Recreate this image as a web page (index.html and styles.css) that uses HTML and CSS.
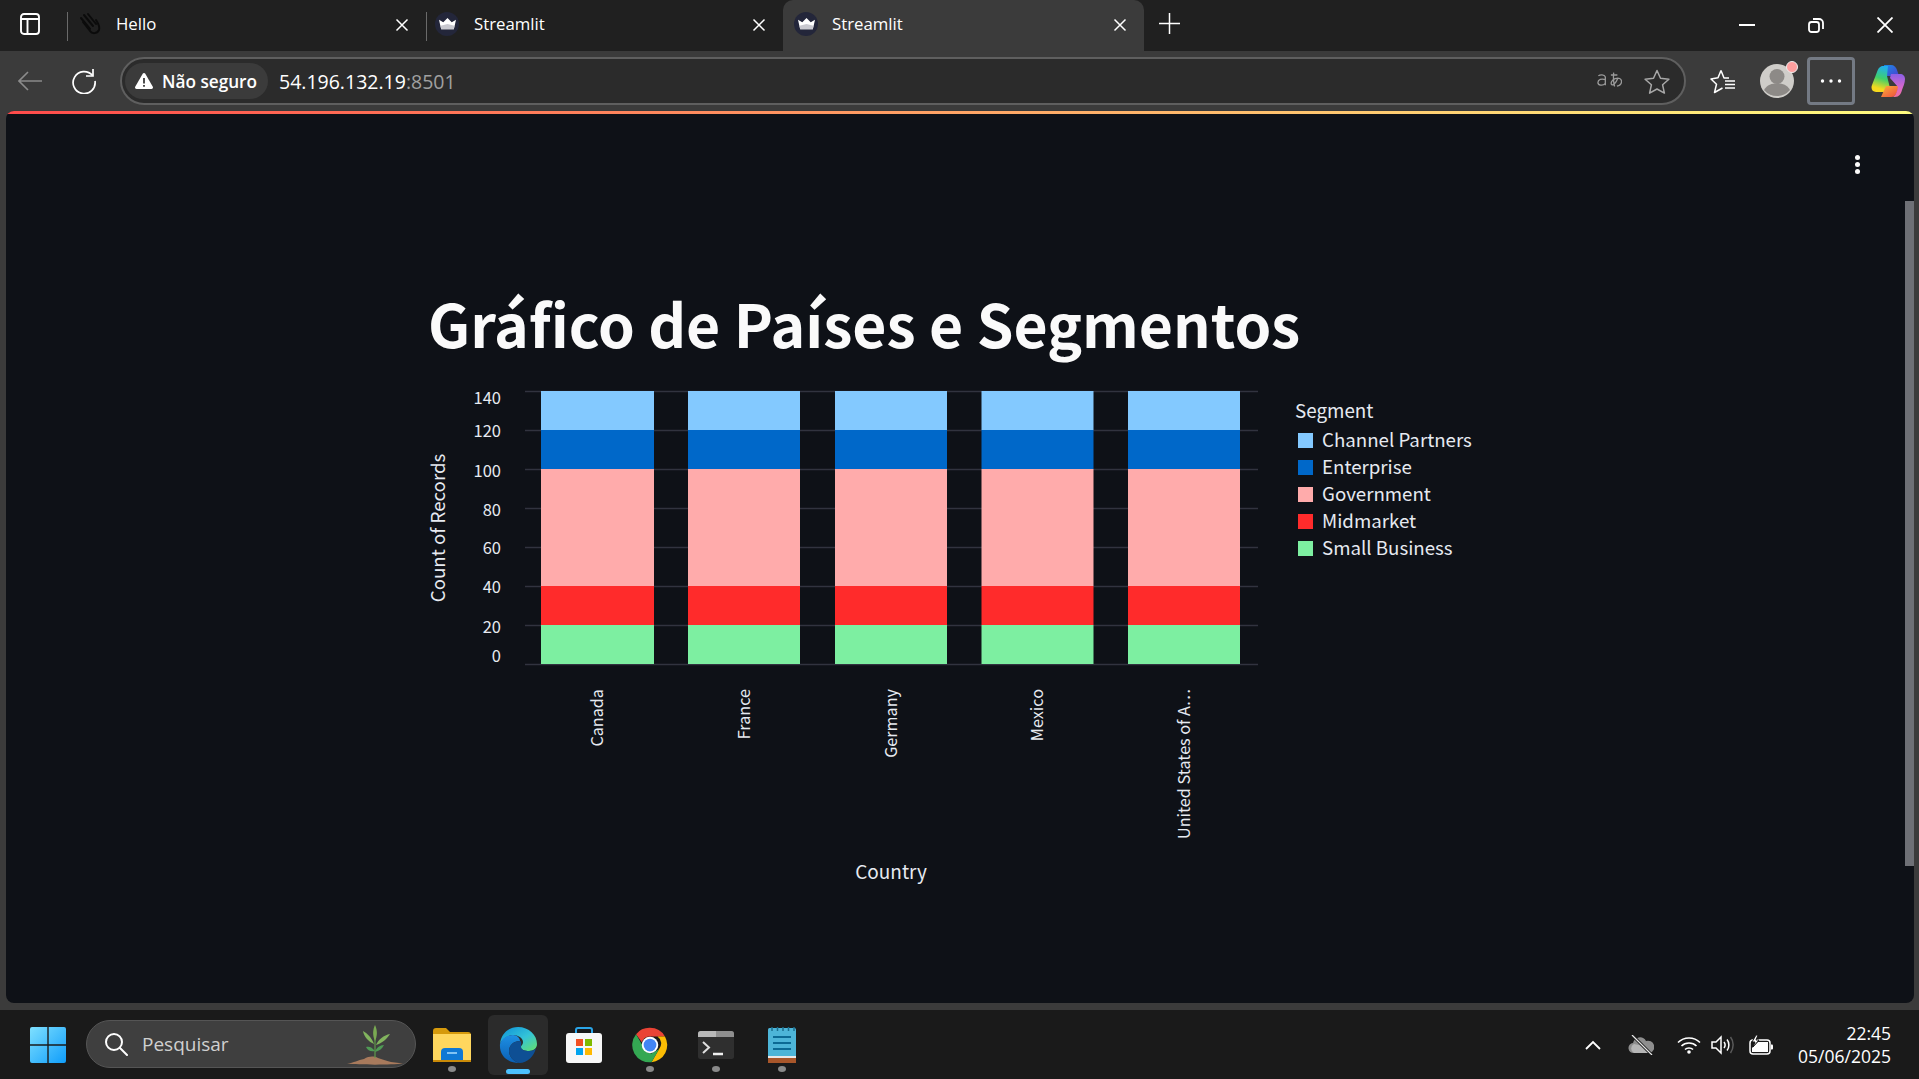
FILE: index.html
```html
<!DOCTYPE html>
<html lang="pt-BR">
<head>
<meta charset="utf-8">
<title>Streamlit</title>
<link rel="stylesheet" href="styles.css">
</head>
<body>
<div class="window">
  <header class="tabstrip">
    <button class="side-btn">
      <svg width="20" height="22" viewBox="0 0 20 22" fill="none" stroke="#fff" stroke-width="1.900"><rect x="1" y="1" width="18" height="20" rx="3"/><path d="M1 6h18M7.500 6v15"/></svg>
    </button>
    <div class="tab">
      <span class="favicon hand">
        <svg width="24" height="24" viewBox="0 0 24 24" fill="none" stroke="#0b0b0b" stroke-width="2" stroke-linecap="round"><path d="M5 10l7 9c2 3 7 3 9-1 1-3-1-7-3-10M3 6l9 11M6 3l9 11M10 2l8 10"/></svg>
      </span>
      <span class="tab-title">Hello</span>
      <svg class="tab-close" width="14" height="14" viewBox="0 0 14 14" stroke="#fff" stroke-width="1.5"><path d="M1.500 1.500l11 11M12.500 1.500l-11 11"/></svg>
    </div>
    <div class="tab tab-second">
      <span class="favicon oval">
        <svg width="17" height="12" viewBox="0 0 16 14" preserveAspectRatio="none"><path d="M0 2l4 3 4-5 4 5 4-3-2 11H2z" fill="#fff"/><path d="M1.500 9L8 7l6.500 2-.6 4H2.100z" fill="#c9c9d0"/></svg>
      </span>
      <span class="tab-title">Streamlit</span>
      <svg class="tab-close" width="14" height="14" viewBox="0 0 14 14" stroke="#fff" stroke-width="1.5"><path d="M1.500 1.500l11 11M12.500 1.500l-11 11"/></svg>
    </div>
    <div class="tab tab-active">
      <span class="favicon oval">
        <svg width="17" height="12" viewBox="0 0 16 14" preserveAspectRatio="none"><path d="M0 2l4 3 4-5 4 5 4-3-2 11H2z" fill="#fff"/><path d="M1.500 9L8 7l6.500 2-.6 4H2.100z" fill="#c9c9d0"/></svg>
      </span>
      <span class="tab-title">Streamlit</span>
      <svg class="tab-close" width="14" height="14" viewBox="0 0 14 14" stroke="#fff" stroke-width="1.5"><path d="M1.500 1.500l11 11M12.500 1.500l-11 11"/></svg>
    </div>
    <button class="new-tab">
      <svg width="21" height="21" viewBox="0 0 21 21" stroke="#fff" stroke-width="1.5"><path d="M10.500 0v21M0 10.500h21"/></svg>
    </button>
    <div class="win-controls">
      <svg width="16" height="16" viewBox="0 0 16 16" stroke="#fff" stroke-width="2"><path d="M0 8h16"/></svg>
      <svg width="16" height="16" viewBox="0 0 16 16" fill="none" stroke="#fff" stroke-width="1.8"><rect x="1" y="5" width="10" height="10" rx="2.500"/><path d="M5 2h6a4 4 0 0 1 4 4v6"/></svg>
      <svg width="16" height="16" viewBox="0 0 16 16" stroke="#fff" stroke-width="1.800"><path d="M.5.5l15 15M15.500.5l-15 15"/></svg>
    </div>
  </header>

  <nav class="toolbar">
    <button class="tool">
      <svg width="24" height="20" viewBox="0 0 24 20" fill="none" stroke="#8b8b8b" stroke-width="1.600"><path d="M24 10H1M10 1l-9 9 9 9"/></svg>
    </button>
    <button class="tool">
      <svg width="26" height="26" viewBox="0 0 26 26" fill="none" stroke="#fff" stroke-width="1.700"><path d="M21.500 7.500A11 11 0 1 0 24 13"/><path d="M22 1v7h-7"/></svg>
    </button>
    <div class="address">
      <div class="security">
        <svg width="18" height="16" viewBox="0 0 18 16"><path d="M9 0c.6 0 1 .3 1.300.8l7.500 13c.5 1-.1 2.200-1.300 2.200h-15C.3 16-.3 14.800.2 13.800L7.700.8C8 .3 8.400 0 9 0z" fill="#fff"/><path d="M8.100 5h1.800v5.500H8.100zM8.100 12h1.800v1.800H8.100z" fill="#3b3b3b"/></svg>
        <span>Não seguro</span>
      </div>
      <span class="url">54.196.132.19<span class="port">:8501</span></span>
      <span class="translate">
        <svg width="25" height="20" viewBox="0 0 27 20" fill="none" stroke="#9a9a9a" stroke-width="1.400"><path d="M1.500 4.500C3 3 8 2.500 9 5.500v9M9 8.500C5 7 1 8.500 1 11.500s5 4.500 8 1"/><path d="M15 3.500h7M18 1c-.5 6-.5 10 1 15M22.500 7c-2 5-5 8-6.500 7s-.5-5 3.500-6.500 7 0 7 3-2.500 4.500-5 5"/></svg>
      </span>
      <svg class="addr-star" width="26" height="25" viewBox="0 0 26 25" fill="none" stroke="#a8a8a8" stroke-width="1.500" stroke-linejoin="round"><path d="M13 1.500l3.500 7.800 8.400.9-6.300 5.600 1.800 8.300L13 20l-7.400 4.100 1.800-8.300-6.300-5.600 8.400-.9z"/></svg>
    </div>
    <button class="tool fav-list">
      <svg width="26" height="25" viewBox="0 0 26 25" fill="none" stroke="#fff" stroke-width="1.500" stroke-linejoin="round"><path d="M11 1.500L8 8.800 1 10l5.500 5.300L4.500 23.500l8-4.500"/><path d="M11 1.500l3 7.500h5M15 12h10M15 15.500h10M15 19h10"/></svg>
    </button>
    <div class="avatar">
      <svg width="36" height="36" viewBox="0 0 36 36"><circle cx="18" cy="18" r="17" fill="#cfcdc9"/><circle cx="18" cy="13.500" r="7.500" fill="#8d8a87"/><path d="M5 27c3-5.500 8-6.500 13-6.500S28 21.500 31 27a17 17 0 0 1-26 0z" fill="#8d8a87"/></svg>
      <span class="avatar-badge"></span>
    </div>
    <button class="more">
      <svg width="22" height="6" viewBox="0 0 22 6" fill="#fff"><circle cx="2.500" cy="3" r="1.700"/><circle cx="11" cy="3" r="1.700"/><circle cx="19.500" cy="3" r="1.700"/></svg>
    </button>
    <div class="copilot">
      <svg width="34" height="32" viewBox="0 0 34 32">
        <defs>
          <linearGradient id="cpA" x1=".5" y1="0" x2=".3" y2="1"><stop offset="0" stop-color="#22b0ec"/><stop offset=".45" stop-color="#3fd06a"/><stop offset=".85" stop-color="#f6d91e"/></linearGradient>
          <linearGradient id="cpB" x1=".5" y1="0" x2=".5" y2="1"><stop offset="0" stop-color="#8b5fe6"/><stop offset=".6" stop-color="#d868cc"/><stop offset="1" stop-color="#f2709a"/></linearGradient>
          <linearGradient id="cpC" x1="0" y1="0" x2="1" y2="1"><stop offset="0" stop-color="#1a8ce8"/><stop offset="1" stop-color="#4a3fd0"/></linearGradient>
          <linearGradient id="cpD" x1="0" y1="0" x2="1" y2="1"><stop offset="0" stop-color="#fbb03a"/><stop offset="1" stop-color="#ee4a3e"/></linearGradient>
        </defs>
        <path d="M13 0h7c3 0 5 2 6 5l2 6H16z" fill="url(#cpC)"/>
        <path d="M11 1c-3 1-4 3-5 6L1 20c-1.500 4 .5 7 4 7h9c2 0 4-1 5-4l-3-12 1-10c-2 0-4 0-6 0z" fill="url(#cpA)"/>
        <path d="M10 32h10c3 0 5-2 6-5l2-6H15z" fill="url(#cpD)"/>
        <path d="M20 9h9c3 0 5 2 5 5 0 4-2 8-3 11-1 4-3 7-7 7h-2c2-1 3-3 4-6l1-4-8-9z" fill="url(#cpB)"/>
      </svg>
    </div>
  </nav>

  <main class="page">
    <div class="decoration"></div>
    <div class="menu-dots"><i></i><i></i><i></i></div>
    <div class="scroll-thumb"></div>
    <section class="block">
      <h1 class="title">Gráfico de Países e Segmentos</h1>
      <svg class="chart" width="1100" height="520" viewBox="416 380 1100 520">
        <g class="grid">
          <path d="M525 391.500H1258M525 430.500H1258M525 469.500H1258M525 508.500H1258M525 547.500H1258M525 586.500H1258M525 625.500H1258M525 664.500H1258"/>
        </g>
        <g>
          <rect class="s1" x="541" y="391" width="113" height="39"/><rect class="s2" x="541" y="430" width="113" height="39"/><rect class="s3" x="541" y="469" width="113" height="117"/><rect class="s4" x="541" y="586" width="113" height="39"/><rect class="s5" x="541" y="625" width="113" height="39"/>
          <rect class="s1" x="688" y="391" width="112" height="39"/><rect class="s2" x="688" y="430" width="112" height="39"/><rect class="s3" x="688" y="469" width="112" height="117"/><rect class="s4" x="688" y="586" width="112" height="39"/><rect class="s5" x="688" y="625" width="112" height="39"/>
          <rect class="s1" x="835" y="391" width="112" height="39"/><rect class="s2" x="835" y="430" width="112" height="39"/><rect class="s3" x="835" y="469" width="112" height="117"/><rect class="s4" x="835" y="586" width="112" height="39"/><rect class="s5" x="835" y="625" width="112" height="39"/>
          <rect class="s1" x="981.500" y="391" width="112" height="39"/><rect class="s2" x="981.500" y="430" width="112" height="39"/><rect class="s3" x="981.500" y="469" width="112" height="117"/><rect class="s4" x="981.500" y="586" width="112" height="39"/><rect class="s5" x="981.500" y="625" width="112" height="39"/>
          <rect class="s1" x="1128" y="391" width="112" height="39"/><rect class="s2" x="1128" y="430" width="112" height="39"/><rect class="s3" x="1128" y="469" width="112" height="117"/><rect class="s4" x="1128" y="586" width="112" height="39"/><rect class="s5" x="1128" y="625" width="112" height="39"/>
        </g>
        <g class="ticks-y">
          <text x="501" y="404">140</text><text x="501" y="437">120</text><text x="501" y="477">100</text><text x="501" y="516">80</text><text x="501" y="554">60</text><text x="501" y="593">40</text><text x="501" y="633">20</text><text x="501" y="662">0</text>
        </g>
        <text class="axis-y" transform="translate(445 528) rotate(-90)">Count of Records</text>
        <g class="ticks-x">
          <text transform="translate(603 689) rotate(-90)">Canada</text>
          <text transform="translate(750 689) rotate(-90)">France</text>
          <text transform="translate(897 689) rotate(-90)">Germany</text>
          <text transform="translate(1043 689) rotate(-90)">Mexico</text>
          <text transform="translate(1190 689) rotate(-90)">United States of A…</text>
        </g>
        <text class="axis-x" x="891" y="879">Country</text>
        <text class="legend-title" x="1295" y="418">Segment</text>
        <g class="legend">
          <rect class="s1" x="1298" y="433" width="15" height="15"/><text x="1322" y="447">Channel Partners</text>
          <rect class="s2" x="1298" y="460" width="15" height="15"/><text x="1322" y="474">Enterprise</text>
          <rect class="s3" x="1298" y="487" width="15" height="15"/><text x="1322" y="501">Government</text>
          <rect class="s4" x="1298" y="514" width="15" height="15"/><text x="1322" y="528">Midmarket</text>
          <rect class="s5" x="1298" y="541" width="15" height="15"/><text x="1322" y="555">Small Business</text>
        </g>
      </svg>
    </section>
  </main>

  <footer class="taskbar">
    <button class="start">
      <svg width="36" height="36" viewBox="0 0 36 36">
        <defs><linearGradient id="winG" x1="0" y1="0" x2="1" y2="1"><stop offset="0" stop-color="#7fe0ff"/><stop offset="1" stop-color="#0f9dfa"/></linearGradient></defs>
        <path d="M2 0h15.300v17.300H0V2a2 2 0 0 1 2-2zM18.700 0H34a2 2 0 0 1 2 2v15.300H18.700zM0 18.700h17.300V36H2a2 2 0 0 1-2-2zM18.700 18.700H36V34a2 2 0 0 1-2 2H18.700z" fill="url(#winG)"/>
      </svg>
    </button>
    <div class="search">
      <svg width="24" height="24" viewBox="0 0 24 24" fill="none" stroke="#fff" stroke-width="2"><circle cx="10" cy="10" r="8"/><path d="M16 16l7 7" stroke-linecap="round"/></svg>
      <span class="search-text">Pesquisar</span>
      <svg class="plant" width="56" height="40" viewBox="0 0 56 40">
        <path d="M0 38.500c7-.5 11-3.500 17-4.500 5-3 10-3 14-1 4 1 8 3 13 4 4 .5 8 1 12 1.500-12 1.500-44 1.500-56 0z" fill="#a87a5c"/>
        <path d="M28 33V6" stroke="#5f9a4a" stroke-width="1.200" fill="none"/>
        <path d="M28 0c2.500 5 2.500 11 0 16-2.500-5-2.500-11 0-16z" fill="#7aaa52"/>
        <path d="M16 6c4 2 9 7 11 13-5-2-10-7-11-13zM43 9c-3 5-8 9-14 11 2-5 8-10 14-11z" fill="#82b45e"/>
        <path d="M19 22c3-1 6 0 9 4-4 1-7 0-9-4zM37 20c-2 4-5 6-9 7 1-4 5-7 9-7z" fill="#4f9a55"/>
      </svg>
    </div>
    <div class="apps">
      <div class="app">
        <svg width="38" height="34" viewBox="0 0 38 34">
          <path d="M0 3a3 3 0 0 1 3-3h10l4 4h18a3 3 0 0 1 3 3v4H0z" fill="#d69a0c"/>
          <path d="M0 6h38v26a2 2 0 0 1-2 2H2a2 2 0 0 1-2-2z" fill="#ffd75e"/>
          <path d="M8 34V24a4 4 0 0 1 4-4h14a4 4 0 0 1 4 4v10z" fill="#0f78d4"/>
          <path d="M14 25h10" stroke="#a8dcff" stroke-width="1.500"/>
          <path d="M0 32h38v2H0z" fill="#c98a08"/>
        </svg>
        <i class="dot"></i>
      </div>
      <div class="app app-active">
        <svg width="38" height="36" viewBox="0 0 38 36">
          <defs>
            <linearGradient id="edgeA" x1="0" y1="0" x2="1" y2="1"><stop offset="0" stop-color="#0c8fd8"/><stop offset=".55" stop-color="#34c4d8"/><stop offset="1" stop-color="#66e06a"/></linearGradient>
            <linearGradient id="edgeB" x1="0" y1="0" x2="0" y2="1"><stop offset="0" stop-color="#1e90e4"/><stop offset="1" stop-color="#0a5fb4"/></linearGradient>
          </defs>
          <path d="M19 0c11 0 19 8 19 17 0 4-3 7-8 7-4 0-8-1-8-4 0-1.500 2-2 2-5 0-4-5-7-10-7C9 8 3 12 1 17 2 7 9 0 19 0z" fill="url(#edgeA)"/>
          <path d="M1 17c2-6 8-9 13-9 4 0 7 3 7 6-6 0-11 4-11 10 0 5 4 10 10 12C9 36 0 29 1 17z" fill="url(#edgeB)"/>
          <path d="M10 24c0-6 5-10 11-10 2 0 1 3 1 6 0 3 4 4 8 4 3 0 6-1 7-3-2 8-8 15-17 15-6-2-10-7-10-12z" fill="#0e4f94"/>
        </svg>
        <i class="pill"></i>
      </div>
      <div class="app">
        <svg width="36" height="36" viewBox="0 0 36 36">
          <path d="M10 8V3a2 2 0 0 1 2-2h12a2 2 0 0 1 2 2v5" fill="none" stroke="#2aa5e8" stroke-width="2"/>
          <rect y="6" width="36" height="30" rx="3" fill="#f7f7f7"/>
          <rect x="10" y="12" width="7" height="7" fill="#f25022"/><rect x="19" y="12" width="7" height="7" fill="#7fba00"/><rect x="10" y="21" width="7" height="7" fill="#00a4ef"/><rect x="19" y="21" width="7" height="7" fill="#ffb900"/>
        </svg>
      </div>
      <div class="app">
        <svg width="36" height="36" viewBox="0 0 48 48">
          <path d="M24 1a23 23 0 0 1 19.900 11.500H24a11.500 11.500 0 0 0-10.900 7.900L5.400 9.600A23 23 0 0 1 24 1z" fill="#ea4335"/>
          <path d="M43.900 12.500A23 23 0 0 1 26 46.900l10-17.300a11.500 11.500 0 0 0-2-17.100z" fill="#fbbc04"/>
          <path d="M26 46.900A23 23 0 0 1 5.400 9.600l10 17.400a11.500 11.500 0 0 0 10.600 8.300l10-5.700z" fill="#34a853"/>
          <circle cx="24" cy="24" r="11" fill="#fff"/><circle cx="24" cy="24" r="8.500" fill="#4285f4"/>
        </svg>
        <i class="dot"></i>
      </div>
      <div class="app">
        <svg width="36" height="28" viewBox="0 0 36 28">
          <rect width="36" height="28" rx="2.500" fill="#2f2f2f"/>
          <path d="M2.500 0h16v6H0V2.500A2.500 2.500 0 0 1 2.500 0z" fill="#b8b8b8"/>
          <path d="M18 0h15.500A2.500 2.500 0 0 1 36 2.500V6H18z" fill="#8f8f8f"/>
          <path d="M5 11l6 5.500-6 5.500" fill="none" stroke="#e0e0e0" stroke-width="2"/>
          <path d="M15 23h10" stroke="#f0f0f0" stroke-width="2.500"/>
        </svg>
        <i class="dot"></i>
      </div>
      <div class="app">
        <svg width="28" height="36" viewBox="0 0 28 36">
          <rect y="1" width="28" height="33" rx="1.500" fill="#4db5d8"/>
          <path d="M0 30h28v6H0z" fill="#a8562a"/>
          <path d="M0 29h28v2H0z" fill="#e8e8e8"/>
          <path d="M4 0v4M9.500 0v4M15 0v4M20.500 0v4M26 0v4" stroke="#1b6f8e" stroke-width="1.500"/>
          <path d="M5 10h18M5 16h18M5 22h18" stroke="#0c6a94" stroke-width="2.200"/>
        </svg>
        <i class="dot"></i>
      </div>
    </div>
    <div class="tray">
      <span class="tray-item chevron">
        <svg width="16" height="10" viewBox="0 0 16 10" fill="none" stroke="#fff" stroke-width="1.800"><path d="M1 9l7-7 7 7"/></svg>
      </span>
      <span class="tray-item cloud">
        <svg width="26" height="20" viewBox="0 0 26 20"><path d="M6 18a5 5 0 0 1-1-10 7 7 0 0 1 13-2 6 6 0 0 1 4 12z" fill="#8e8e8e"/><path d="M6 18a5 5 0 0 1 0-9l9 2 7 7z" fill="#b5b5b5"/><path d="M4 0l20 20" stroke="#1a1a1a" stroke-width="3"/><path d="M4 0l20 20" stroke="#e8e8e8" stroke-width="1.200"/></svg>
      </span>
      <span class="tray-item wifi">
        <svg width="24" height="18" viewBox="0 0 24 18" fill="none" stroke="#fff" stroke-width="1.600"><path d="M1 6.500c6-6 16-6 22 0M4.500 10c4-4 11-4 15 0M8 13.500c2-2 6-2 8 0"/><circle cx="12" cy="16" r="1.800" fill="#fff" stroke="none"/></svg>
      </span>
      <span class="tray-item volume">
        <svg width="24" height="20" viewBox="0 0 24 20" fill="none" stroke="#fff" stroke-width="1.500"><path d="M1 7h4l5-5v16l-5-5H1z"/><path d="M13 7c1.500 2 1.500 4 0 6M16 4.500c2.500 3 2.500 8 0 11"/><path d="M19.500 2c3.500 4.500 3.500 11 0 16" stroke="#5a5a5a"/></svg>
      </span>
      <span class="tray-item battery">
        <svg width="24" height="20" viewBox="0 0 24 20"><rect x="1" y="5" width="20" height="14" rx="3" fill="none" stroke="#fff" stroke-width="1.500"/><path d="M22 9.500h1a1 1 0 0 1 1 1v3a1 1 0 0 1-1 1h-1z" fill="#fff"/><path d="M3 17V13L9 7h10v10z" fill="#fff"/><path d="M7 0L3 7h3L4 12l6-7H7l2-5z" fill="#fff" stroke="#1a1a1a"/></svg>
      </span>
      <div class="clock"><span>22:45</span><span>05/06/2025</span></div>
    </div>
  </footer>
</div>
</body>
</html>
```
FILE: styles.css
```css
* { box-sizing: border-box; }
html, body { margin: 0; height: 100%; overflow: hidden; }
body { background: #3b3b3b; font-family: "Open Sans", "Noto Sans", sans-serif; color: #fff; }
button { background: none; border: 0; padding: 0; color: inherit; display: flex; align-items: center; justify-content: center; }
svg { display: block; flex: none; }

.window { display: flex; flex-direction: column; height: 1079px; }

/* tab strip */
.tabstrip { height: 51px; background: #202020; display: flex; align-items: stretch; flex: none; }
.side-btn { width: 60px; margin-right: 7px; padding-bottom: 3px; }
.tab { width: 359px; display: flex; align-items: center; position: relative; font-size: 16.800px; padding-left: 9px; }
.tab::before { content: ""; position: absolute; left: 0; top: 12px; height: 29px; width: 1px; background: #6a6a6a; }
.tab-second { width: 357px; }
.favicon { width: 24px; height: 24px; display: flex; align-items: center; justify-content: center; margin-top: -3px; flex: none; }
.oval { background: #23263a; border-radius: 50%; }
.hand { margin-left: 2px; }
.tab-title { margin-left: 15px; margin-top: -4px; flex: 1; }
.hand + .tab-title { margin-left: 14px; }
.tab-close { margin-right: 17px; margin-top: -2px; }
.tab-active { width: 361px; background: #3b3b3b; border-radius: 10px 10px 0 0; padding-left: 11px; }
.tab-active::before { display: none; }
.tab-active .tab-title { margin-left: 14px; }
.tab-active .tab-close { margin-right: 17px; }
.new-tab { width: 50px; padding-bottom: 5px; }
.win-controls { margin-left: auto; display: flex; align-items: center; gap: 53px; padding: 0 26px 0 0; margin-top: -2px; }

/* toolbar */
.toolbar { height: 60px; background: #3b3b3b; display: flex; align-items: center; flex: none; padding-left: 12px; }
.tool { width: 36px; height: 36px; }
.tool + .tool { margin-left: 18px; }
.address { width: 1566px; height: 48px; margin-left: 18px; border: 2px solid #5f5f5f; border-radius: 24px; background: #2b2b2b; display: flex; align-items: center; padding-left: 3px; }
.security { height: 36px; width: 143px; border-radius: 18px; background: #3b3b3b; display: flex; align-items: center; gap: 9px; padding-left: 10px; font-weight: 600; font-size: 17.200px; }
.url { margin-left: 11px; font-size: 19.500px; color: #fff; flex: 1; }
.port { color: #a0a0a0; }
.translate { margin-right: 22px; }
.addr-star { margin-right: 14px; }
.fav-list { margin-left: 19px; }
.avatar { position: relative; width: 36px; height: 36px; margin-left: 18px; }
.avatar-badge { position: absolute; right: -3px; top: -2px; width: 12px; height: 12px; border-radius: 50%; background: #ff9f9f; border: 1px solid #eee; }
.more { width: 48px; height: 48px; margin-left: 12px; border: 3px solid #747a84; border-radius: 4px; }
.copilot { margin-left: 16px; }

/* page */
.page { position: relative; height: 892px; margin: 0 5px 0 6px; flex: none; background: #0e1117; border-radius: 8px; overflow: hidden; display: flex; flex-direction: column; }
.decoration { height: 3px; flex: none; background: linear-gradient(90deg, #ff4b4b, #fffd80); }
.menu-dots { position: absolute; top: 44px; right: 54px; display: flex; flex-direction: column; gap: 2px; }
.menu-dots i { width: 5px; height: 5px; border-radius: 50%; background: #fafafa; }
.scroll-thumb { position: absolute; right: 0; top: 90px; width: 9px; height: 665px; background: #6e7076; }
.block { padding: 164px 0 0 410px; }
.title { margin: 0 0 0 12px; font-family: "Noto Sans CJK JP", sans-serif; font-weight: 700; font-size: 58.900px; line-height: 90px; color: #fafafa; }
.chart { margin-top: 12px; }

/* chart */
.chart text { font-family: "Noto Sans CJK JP", sans-serif; fill: #e6eaf1; }
.grid path { stroke: #31333f; stroke-width: 1.500; fill: none; }
.s1 { fill: #83c9ff; }
.s2 { fill: #0068c9; }
.s3 { fill: #ffabab; }
.s4 { fill: #ff2b2b; }
.s5 { fill: #7defa1; }
.ticks-y text { font-size: 16.500px; text-anchor: end; }
.axis-y { font-size: 18.700px; text-anchor: middle; }
.ticks-x text { font-size: 16.200px; text-anchor: end; }
.axis-x { font-size: 19px; text-anchor: middle; }
.legend-title { font-size: 18.800px; }
.legend text { font-size: 18.700px; }

/* taskbar */
.taskbar { height: 69px; margin-top: 7px; background: #1a1a1a; display: flex; align-items: center; flex: none; padding-left: 18px; }
.start { width: 60px; }
.search { width: 330px; height: 48px; margin-left: 8px; margin-top: -2px; background: #3f3f3f; border: 1px solid #555; border-radius: 24px; display: flex; align-items: center; padding: 0 12px 0 17px; }
.search-text { margin-left: 14px; font-size: 19px; color: #d0d0d0; flex: 1; }
.plant { margin-top: 2px; }
.apps { display: flex; gap: 6px; margin-left: 6px; }
.app { position: relative; width: 60px; height: 60px; display: flex; align-items: center; justify-content: center; border-radius: 6px; }
.app-active { background: #2b2b2b; }
.dot { position: absolute; bottom: 3px; left: 26px; width: 8px; height: 6px; border-radius: 50%; background: #8a8a8a; }
.pill { position: absolute; bottom: 1px; left: 18px; width: 24px; height: 5px; border-radius: 3px; background: #4cc2ff; }
.tray { margin-left: auto; display: flex; align-items: center; padding-right: 28px; }
.tray-item { display: flex; justify-content: center; width: 36px; }
.cloud { margin-left: 12px; }
.wifi { width: 34px; margin-left: 13px; }
.volume { width: 34px; }
.battery { width: 42px; }
.clock { width: 109px; display: flex; flex-direction: column; align-items: flex-end; font-size: 17.500px; line-height: 23px; }
```
